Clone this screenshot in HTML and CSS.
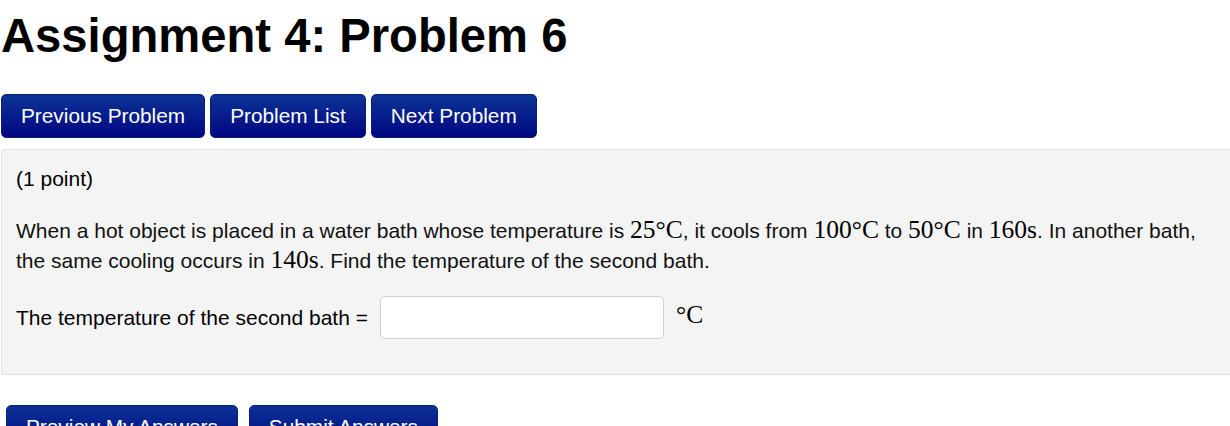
FILE: index.html
```html
<!DOCTYPE html>
<html>
<head>
<meta charset="utf-8">
<link rel="stylesheet" href="styles.css">
</head>
<body>
<h1 class="title">Assignment 4: Problem 6</h1>
<div class="nav">
  <button class="btn">Previous Problem</button>
  <button class="btn">Problem List</button>
  <button class="btn">Next Problem</button>
</div>
<div class="problem">
  <p class="points">(1 point)</p>
  <p class="text">When a hot object is placed in a water bath whose temperature is <span class="m">25°C</span>, it cools from <span class="m">100°C</span> to <span class="m">50°C</span> in <span class="m">160s</span>. In another bath, the same cooling occurs in <span class="m">140s</span>. Find the temperature of the second bath.</p>
  <div class="answer">
    <span>The temperature of the second bath =</span>
    <input class="field" type="text">
    <span class="m unit">°C</span>
  </div>
</div>
<div class="submit">
  <button class="btn">Preview My Answers</button>
  <button class="btn">Submit Answers</button>
</div>
</body>
</html>
```
FILE: styles.css
```css
html, body {
  margin: 0;
  padding: 0;
  background: #fff;
  font-family: "Liberation Sans", Arial, sans-serif;
  color: #000;
}
.title {
  margin: 0;
  padding: 8px 0 0 1px;
  font-size: 47.2px;
  line-height: 56px;
  font-weight: bold;
}
.nav {
  display: flex;
  gap: 5px;
  margin-top: 30px;
  padding-left: 1px;
}
.btn {
  font-family: "Liberation Sans", Arial, sans-serif;
  font-size: 20.8px;
  color: #fff;
  background: linear-gradient(#0c3396, #010781);
  border: 1px solid #0a1f6e;
  border-radius: 5px;
  height: 44px;
  padding: 0 19px;
  cursor: pointer;
}
.problem {
  margin-top: 11px;
  margin-left: 1px;
  background: #f4f4f4;
  border: 1px solid #e2e2e2;
  border-right: none;
  border-radius: 4px 0 0 4px;
  padding: 15px 14px 35px 14px;
  font-size: 21px;
}
.problem p {
  margin: 0;
}
.points {
  line-height: 28px;
}
.text {
  margin-top: 23px !important;
  line-height: 30px;
  color: #111;
}
.m {
  font-family: "Liberation Serif", "DejaVu Serif", serif;
  font-size: 25.5px;
  line-height: 1;
  color: #000;
}
.answer {
  display: flex;
  align-items: center;
  gap: 12px;
  margin-top: 20px;
}
.field {
  width: 284px;
  height: 43px;
  box-sizing: border-box;
  border: 1px solid #cfcfcf;
  border-radius: 5px;
  background: #fff;
}
.unit {
  margin-top: -5px;
}
.submit {
  display: flex;
  gap: 11px;
  margin-top: 30px;
  padding-left: 6px;
}
```
